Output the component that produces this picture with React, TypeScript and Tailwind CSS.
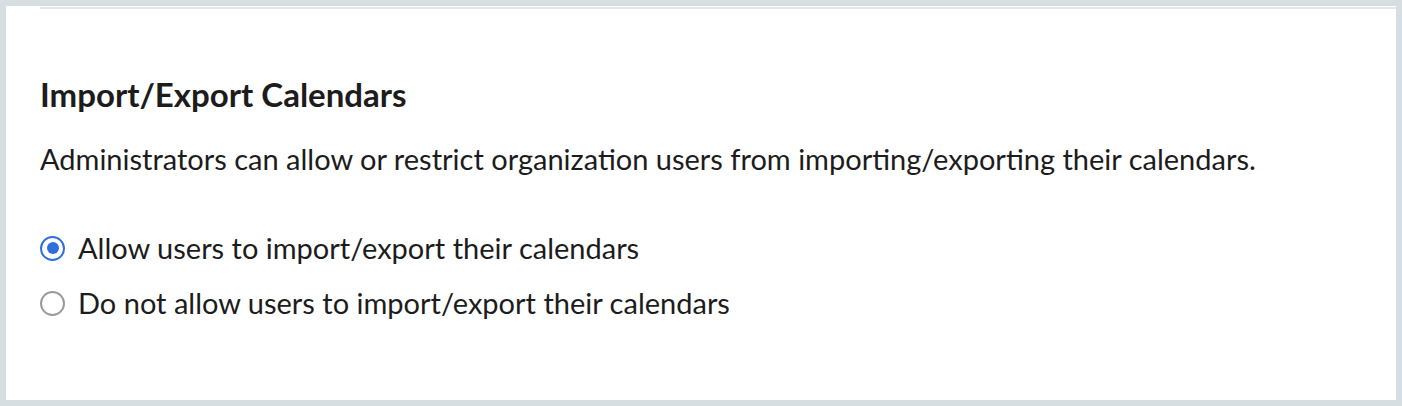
import React from "react";

export default function App() {
  return (
    <div className="w-[1402px] h-[406px] bg-[#d7dee2] p-[6px] box-border" style={{ fontFamily: "Lato, 'Noto Sans', sans-serif" }}>
      <div className="w-full h-full bg-white flex flex-col">
        <div className="ml-[34px] mt-[1px] h-[2px] bg-[#e4e8eb]" />
        <div className="px-[34px] pt-[65px] flex flex-col">
          <h2 className="text-[33px] leading-[40px] font-bold text-[#1c1c1c] m-0">Import/Export Calendars</h2>
          <p className="mt-[27px] text-[29px] leading-[36px] text-[#1c1c1c]">
            Administrators can allow or restrict organization users from importing/exporting their calendars.
          </p>
          <div className="mt-[53px] flex flex-col gap-[19px]">
            <label className="flex items-center gap-[13px] text-[29px] leading-[36px] text-[#1c1c1c]">
              <span className="w-[25px] h-[25px] rounded-full border-[2.5px] border-[#2f6fdc] flex items-center justify-center">
                <span className="w-[12px] h-[12px] rounded-full bg-[#2f6fdc]" />
              </span>
              Allow users to import/export their calendars
            </label>
            <label className="flex items-center gap-[13px] text-[29px] leading-[36px] text-[#1c1c1c]">
              <span className="w-[25px] h-[25px] rounded-full border-2 border-[#9a9a9a]" />
              Do not allow users to import/export their calendars
            </label>
          </div>
        </div>
      </div>
    </div>
  );
}
